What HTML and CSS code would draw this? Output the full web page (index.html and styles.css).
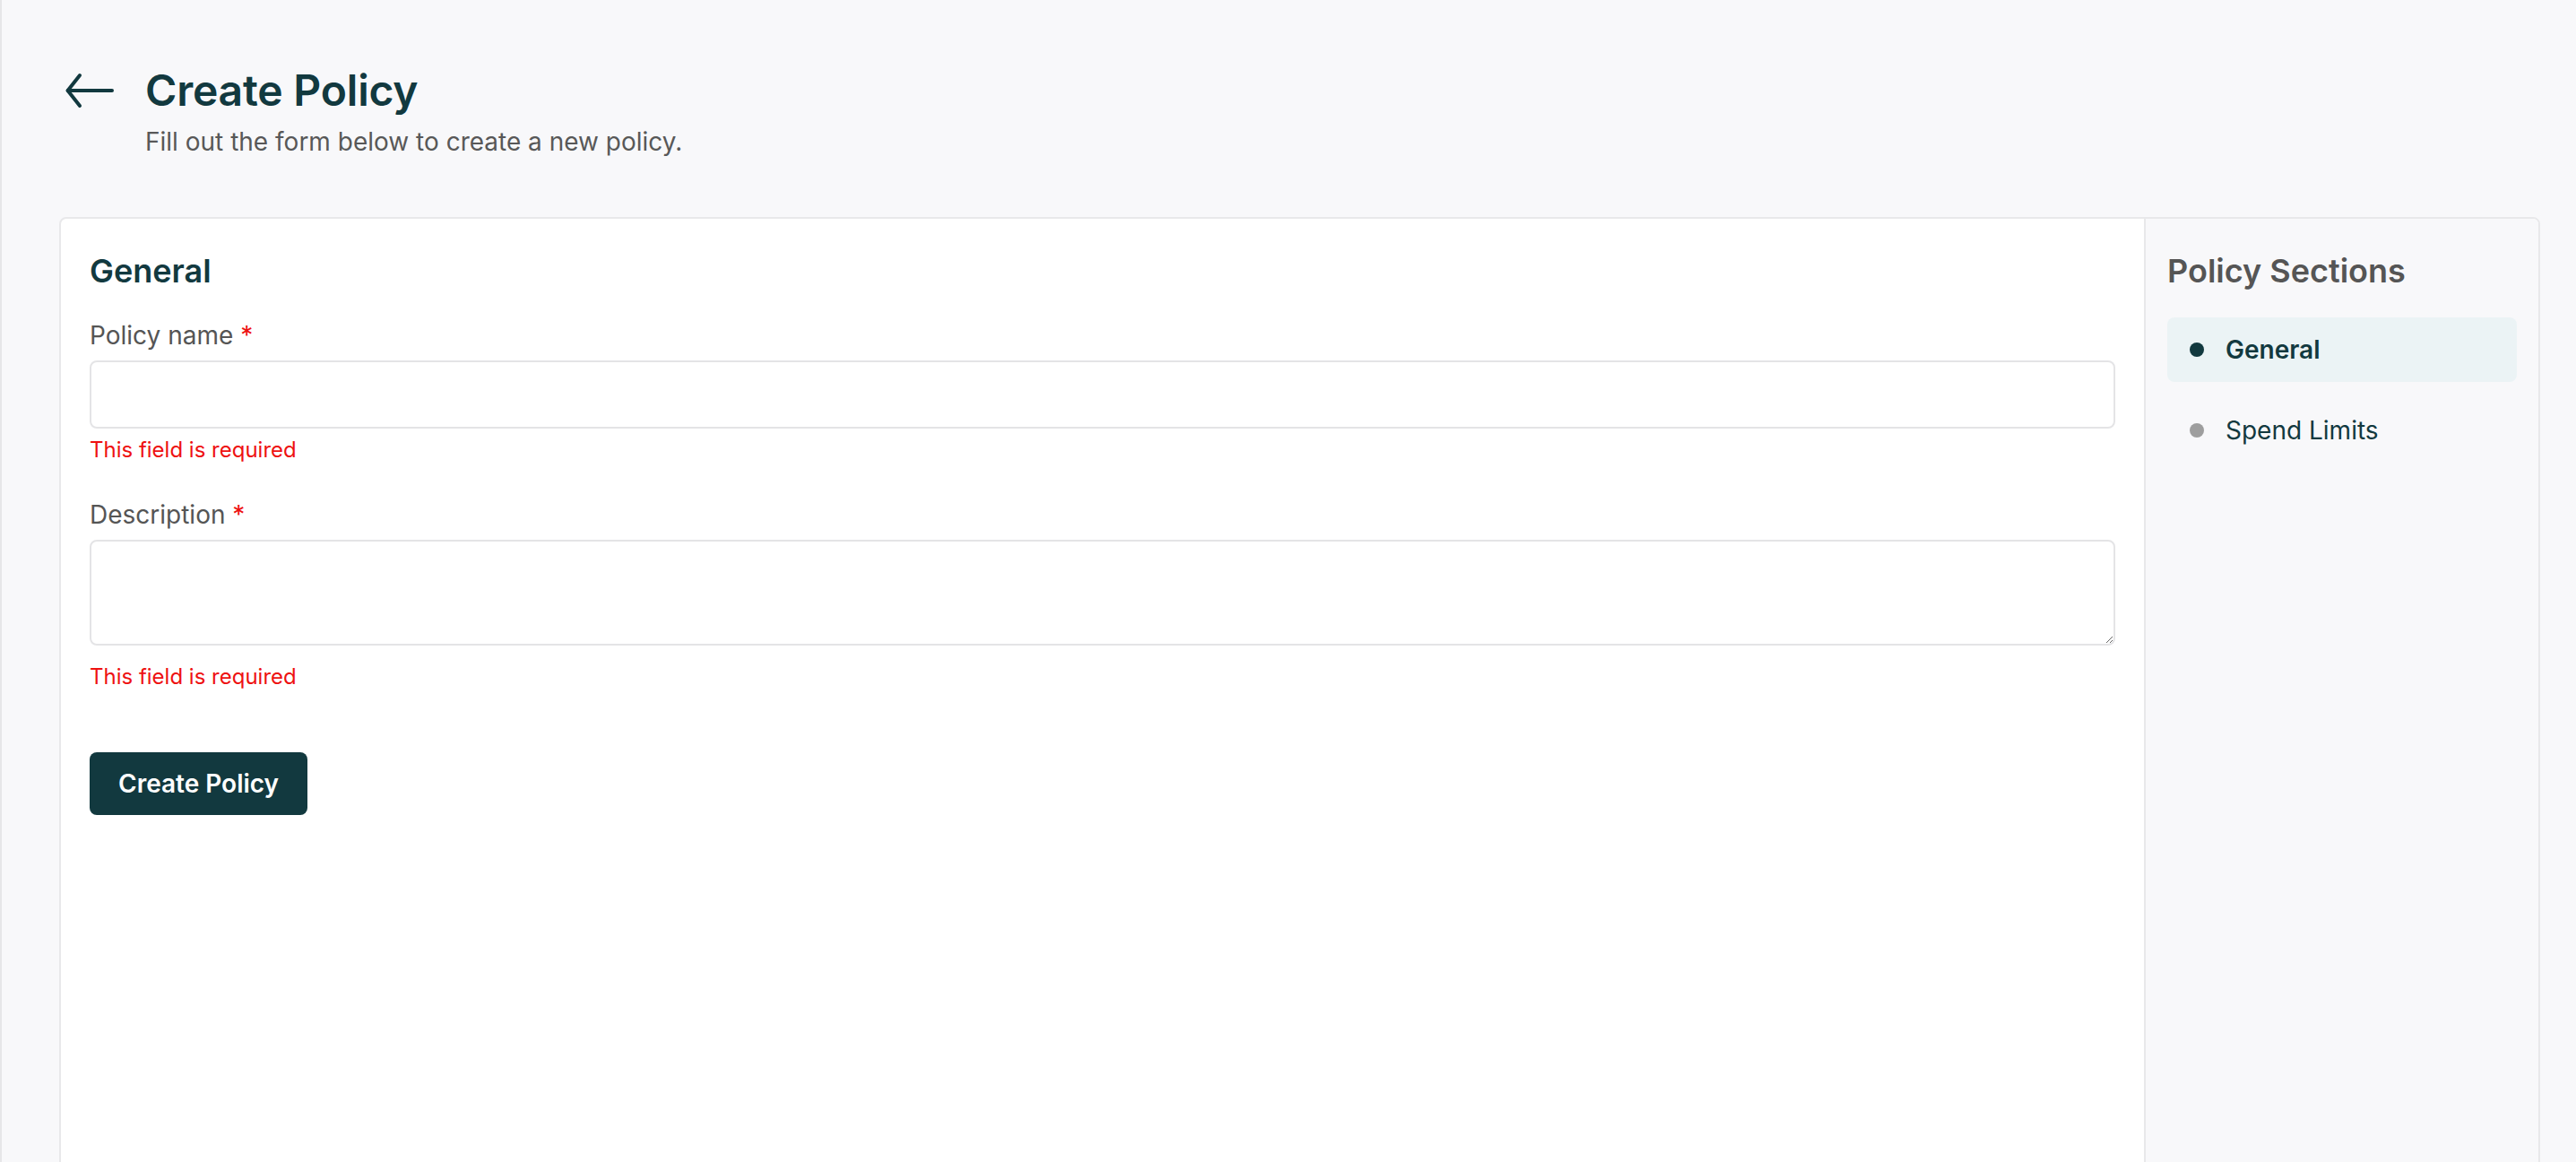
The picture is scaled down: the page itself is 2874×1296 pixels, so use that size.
FILE: index.html
```html
<!DOCTYPE html>
<html lang="en">
<head>
<meta charset="utf-8">
<title>Create Policy</title>
<link rel="stylesheet" href="styles.css">
</head>
<body>
<div class="page">
  <header class="header">
    <button class="back" aria-label="Back">
      <svg width="56" height="40" viewBox="0 0 28 20" fill="none" stroke="#12393f" stroke-width="2" stroke-linecap="round" stroke-linejoin="round">
        <path d="M26.5 10H1.8"/>
        <path d="M8.5 1.5L1.8 10L8.5 18.5"/>
      </svg>
    </button>
    <div class="titles">
      <h1 class="title">Create Policy</h1>
      <p class="subtitle">Fill out the form below to create a new policy.</p>
    </div>
  </header>

  <div class="card">
    <form class="form">
      <h2 class="section-title">General</h2>
      <div class="field">
        <label class="label">Policy name <span class="req">*</span></label>
        <input class="input" type="text">
        <div class="error">This field is required</div>
      </div>
      <div class="field">
        <label class="label">Description <span class="req">*</span></label>
        <textarea class="textarea"></textarea>
        <div class="error error-ta">This field is required</div>
      </div>
      <button class="submit" type="button">Create Policy</button>
    </form>
    <aside class="sidebar">
      <h2 class="side-title">Policy Sections</h2>
      <nav class="nav">
        <div class="nav-item active"><span class="dot"></span><span>General</span></div>
        <div class="nav-item"><span class="dot"></span><span>Spend Limits</span></div>
      </nav>
    </aside>
  </div>
</div>
</body>
</html>
```

FILE: styles.css
```css
* { box-sizing: border-box; }
html, body {
  margin: 0;
  padding: 0;
  height: 100%;
  overflow: hidden;
}
body {
  background: #f8f8fa;
  font-family: Inter, "Noto Sans", sans-serif;
  color: #12393f;
}
.page {
  min-height: 1296px;
  border-left: 2px solid #e6e6e8;
  padding: 72px 40px 0 64px;
}
.header {
  display: flex;
  align-items: flex-start;
  gap: 30px;
}
.back {
  border: 0;
  background: transparent;
  padding: 0;
  margin: 9px 0 0 6px;
  width: 60px;
  height: 40px;
  display: flex;
  align-items: center;
  justify-content: flex-start;
  cursor: pointer;
}
.titles { display: flex; flex-direction: column; }
.title {
  margin: 0;
  font-size: 48px;
  line-height: 58px;
  font-weight: 600;
  color: #12393f;
  letter-spacing: -0.2px;
}
.subtitle {
  margin: 8px 0 0;
  font-size: 28px;
  line-height: 40px;
  color: #585858;
}
.card {
  margin-top: 64px;
  background: #fff;
  border: 2px solid #e8e8ea;
  border-radius: 8px;
  display: grid;
  grid-template-columns: 1fr 440px;
  min-height: 1100px;
}
.form {
  padding: 32px;
}
.section-title {
  margin: 0;
  font-size: 36px;
  line-height: 52px;
  font-weight: 600;
  color: #12393f;
}
.field { display: flex; flex-direction: column; }
.field:first-of-type { margin-top: 26px; }
.field + .field { margin-top: 36px; }
.label {
  font-size: 28px;
  line-height: 40px;
  color: #555;
  margin-bottom: 8px;
}
.req { color: #ee1111; }
.input, .textarea {
  width: 100%;
  border: 2px solid #e4e4e6;
  border-radius: 8px;
  background: #fff;
  font-family: inherit;
  font-size: 28px;
  outline: none;
}
.input { height: 76px; padding: 0 20px; }
.textarea {
  height: 118px;
  padding: 16px 20px;
  resize: vertical;
  display: block;
}
.error {
  margin-top: 8px;
  font-size: 24px;
  line-height: 32px;
  color: #ee1111;
}
.error-ta { margin-top: 19px; }
.submit {
  margin-top: 68px;
  height: 70px;
  padding: 0 32px;
  border: 0;
  border-radius: 8px;
  background: #12393f;
  color: #fff;
  font-family: inherit;
  font-size: 28px;
  font-weight: 600;
  cursor: pointer;
}
.sidebar {
  background: #f8f8fa;
  border-left: 2px solid #e8e8ea;
  border-radius: 0 6px 0 0;
  padding: 32px 24px 24px 24px;
}
.side-title {
  margin: 0;
  font-size: 36px;
  line-height: 52px;
  font-weight: 600;
  color: #555;
}
.nav {
  margin-top: 26px;
  display: flex;
  flex-direction: column;
  gap: 18px;
}
.nav-item {
  height: 72px;
  display: flex;
  align-items: center;
  gap: 24px;
  padding-left: 25px;
  border-radius: 8px;
  font-size: 28px;
  color: #12393f;
}
.nav-item .dot {
  width: 16px;
  height: 16px;
  border-radius: 50%;
  background: #9e9e9e;
  flex: none;
}
.nav-item.active {
  background: #ebf3f5;
  font-weight: 600;
}
.nav-item.active .dot { background: #12393f; }
```
